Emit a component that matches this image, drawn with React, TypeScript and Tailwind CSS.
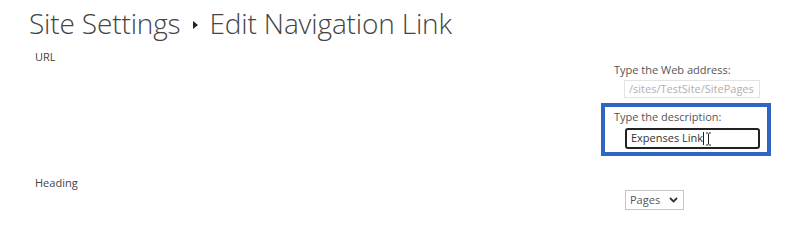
export default function App() {
  return (
    <div className="relative h-[249px] w-[800px] overflow-hidden bg-white font-['Open_Sans',sans-serif] text-[#444]">
      <h1 className="flex items-center pl-[29px] pt-[5px] text-[28px] font-light leading-[37px] tracking-[-0.15px] text-[#444]">
        <span>Site Settings</span>
        <svg className="mx-[12px] mt-[3px]" width="5" height="8" viewBox="0 0 5 8">
          <path d="M0 0L5 4L0 8Z" fill="#222" />
        </svg>
        <span>Edit Navigation Link</span>
      </h1>

      <div className="flex">
        <div className="w-[578px] pl-[35px]">
          <div className="mt-[8px] text-[11px] leading-[14px]">URL</div>
        </div>
        <div className="flex w-[222px] flex-col">
          <div className="pl-[36px] pt-[21px] text-[11px] leading-[14px] text-[#555]">Type the Web address:</div>
          <div className="ml-[46px] mt-[3px] flex h-[18px] w-[136px] items-center border border-[#e3e3e3] pl-[4px] text-[11px] text-[#b0b0b0]">
            /sites/TestSite/SitePages
          </div>
          <div className="ml-[23px] mt-[5px] h-[53px] w-[170px] border-[4px] border-[#2f66c2] pl-[9px] pt-[3px]">
            <div className="text-[11px] leading-[14px] text-[#555]">Type the description:</div>
            <div className="ml-[11px] mt-[4px] flex h-[21px] w-[135px] items-center rounded-[3px] border-2 border-[#222] pl-[4px] text-[11px] text-[#333]">
              <span>Expenses Link</span>
              <span className="h-[13px] w-px bg-[#222]" />
              <svg className="ml-[1px]" width="7" height="14" viewBox="0 0 7 14">
                <path d="M1 1h2M4 1h2M3.5 1.5v11M1 13h2M4 13h2" fill="none" stroke="#222" strokeWidth="1" />
              </svg>
            </div>
          </div>
        </div>
      </div>

      <div className="flex">
        <div className="w-[578px] pl-[35px]">
          <div className="mt-[20px] text-[11px] leading-[14px]">Heading</div>
        </div>
        <div className="pl-[47px] pt-[34px]">
          <div className="flex h-[20px] w-[59px] items-center justify-between border border-[#c6c6c6] pl-[4px] pr-[5px] text-[11px] text-[#555]">
            <span>Pages</span>
            <svg width="9" height="6" viewBox="0 0 9 6">
              <path d="M1 1l3.5 3.5L8 1" fill="none" stroke="#333" strokeWidth="1.8" />
            </svg>
          </div>
        </div>
      </div>
    </div>
  );
}
